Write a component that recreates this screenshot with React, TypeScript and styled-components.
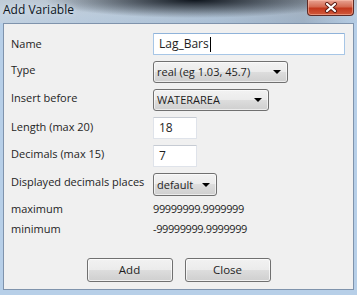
import styled, { createGlobalStyle } from "styled-components";

const GlobalStyle = createGlobalStyle`
  html, body {
    margin: 0;
    padding: 0;
    background: #ffffff;
  }
  * {
    box-sizing: border-box;
  }
`;

const font = `"Open Sans", "Noto Sans", sans-serif`;

const CloseIcon = () => (
  <svg width="14" height="11" viewBox="0 0 14 11">
    <path d="M3 2 L11 9 M11 2 L3 9" stroke="#5a1a12" strokeWidth="4" strokeLinecap="round" />
    <path d="M3 2 L11 9 M11 2 L3 9" stroke="#ffffff" strokeWidth="2.2" strokeLinecap="round" />
  </svg>
);

const Arrow = () => (
  <svg width="8" height="4" viewBox="0 0 8 4">
    <path d="M0 0 L8 0 L4 4 Z" fill="#000000" />
  </svg>
);

const Window = styled.div`
  width: 357px;
  height: 295px;
  display: flex;
  flex-direction: column;
  background: #b7cfe8;
  font-family: ${font};
  font-size: 11px;
  color: #1e1e1e;
`;

const TitleBar = styled.div`
  height: 23px;
  flex: none;
  display: flex;
  align-items: flex-start;
  justify-content: space-between;
  padding: 2px 3px 0 3px;
  background:
    radial-gradient(ellipse 150px 18px at 195px 0px, rgba(12, 18, 26, 0.98), rgba(12, 18, 26, 0) 100%),
    linear-gradient(to right, rgba(200, 210, 220, 0.6) 0%, rgba(120, 130, 140, 0.2) 60%, rgba(110, 118, 128, 0.35) 85%, rgba(170, 190, 210, 0.2) 100%),
    linear-gradient(to bottom, #b4c2d0 0%, #bed2e6 60%, #b7cfe8 100%);
`;

const Title = styled.span`
  font-size: 12px;
  color: #0c141c;
  text-shadow: 0 0 6px rgba(230, 240, 250, 0.9);
  line-height: 16px;
`;

const CloseButton = styled.div`
  width: 47px;
  height: 16px;
  margin-top: -2px;
  display: flex;
  align-items: center;
  justify-content: center;
  border: 1px solid #5e2a25;
  border-top: none;
  border-radius: 0 0 4px 4px;
  background: linear-gradient(to bottom, #e8a393 0%, #d46a52 45%, #c3381d 55%, #d05a3c 100%);
  box-shadow: inset 0 0 0 1px rgba(255, 200, 180, 0.5);
`;

const Client = styled.div`
  flex: 1;
  margin: 0 3px 5px 3px;
  border: 1px solid #7f93ac;
  background: #f0f0f0;
  display: flex;
  flex-direction: column;
  padding: 9px 7px 7px 7px;
`;

const Form = styled.div`
  display: grid;
  grid-template-columns: 142px 1fr;
  row-gap: 6px;
  align-items: center;
`;

const Label = styled.div<{ $lift?: number }>`
  line-height: 16px;
  white-space: nowrap;
  padding-bottom: ${(p) => p.$lift ?? 0}px;
`;

const Plain = styled.div`
  line-height: 14px;
  height: 14px;
  white-space: nowrap;
`;

const Value = styled(Plain)`
  letter-spacing: -0.4px;
`;

const Input = styled.div<{ $width: number; $focus?: boolean }>`
  width: ${(p) => p.$width}px;
  height: 22px;
  background: #ffffff;
  border: 1px solid ${(p) => (p.$focus ? "#a7c6e6" : "#dfe3ea")};
  border-top-color: ${(p) => (p.$focus ? "#8fb3da" : "#c6cbd3")};
  border-radius: 1px;
  padding: 0 5px;
  display: flex;
  align-items: center;
  line-height: 16px;
  font-size: 12px;
`;

const Caret = styled.span`
  display: inline-block;
  width: 1px;
  height: 15px;
  background: #000000;
  margin-left: 1px;
`;

const Select = styled.div<{ $width: number; $height?: number }>`
  width: ${(p) => p.$width}px;
  height: ${(p) => p.$height ?? 22}px;
  border: 1px solid #707070;
  border-radius: 3px;
  background: linear-gradient(to bottom, #f2f2f2 0%, #ebebeb 50%, #dddddd 50%, #cfcfcf 100%);
  box-shadow: inset 0 0 0 1px rgba(255, 255, 255, 0.6);
  display: flex;
  align-items: center;
  justify-content: space-between;
  padding: 0 6px 0 3px;
  line-height: 16px;
  white-space: nowrap;
  font-size: 11px;
`;

const Footer = styled.div`
  margin-top: auto;
  display: flex;
  justify-content: center;
  gap: 12px;
`;

const Button = styled.div`
  width: 86px;
  height: 24px;
  border: 1px solid #707070;
  border-radius: 3px;
  background: linear-gradient(to bottom, #f2f2f2 0%, #ebebeb 50%, #dddddd 50%, #cfcfcf 100%);
  box-shadow: inset 0 0 0 1px rgba(255, 255, 255, 0.7);
  display: flex;
  align-items: center;
  justify-content: center;
  line-height: 16px;
  font-size: 11.5px;
`;

export default function App() {
  return (
    <>
      <GlobalStyle />
      <Window>
        <TitleBar>
          <Title>Add Variable</Title>
          <CloseButton>
            <CloseIcon />
          </CloseButton>
        </TitleBar>
        <Client>
          <Form>
            <Label>Name</Label>
            <Input $width={192} $focus>
              Lag_Bars
              <Caret />
            </Input>
            <Label $lift={5}>Type</Label>
            <Select $width={135}>
              real (eg 1.03, 45.7)
              <Arrow />
            </Select>
            <Label $lift={5}>Insert before</Label>
            <Select $width={116}>
              WATERAREA
              <Arrow />
            </Select>
            <Label $lift={3}>Length (max 20)</Label>
            <Input $width={44}>18</Input>
            <Label $lift={5}>Decimals (max 15)</Label>
            <Input $width={44}>7</Input>
            <Label $lift={5}>Displayed decimals places</Label>
            <Select $width={64} $height={23}>
              default
              <Arrow />
            </Select>
            <Plain>maximum</Plain>
            <Value>99999999.9999999</Value>
            <Plain>minimum</Plain>
            <Value>-99999999.9999999</Value>
          </Form>
          <Footer>
            <Button>Add</Button>
            <Button>Close</Button>
          </Footer>
        </Client>
      </Window>
    </>
  );
}
